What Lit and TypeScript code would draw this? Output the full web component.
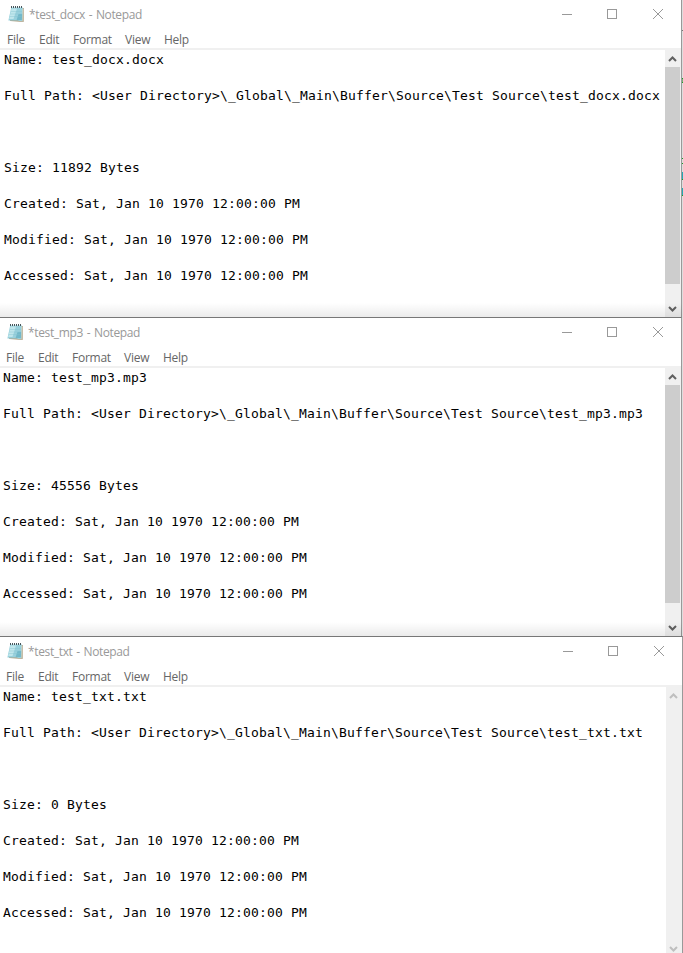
import { LitElement, html, css, svg, nothing } from "lit";
import { customElement, property } from "lit/decorators.js";
import { classMap } from "lit/directives/class-map.js";

@customElement("notepad-window")
class NotepadWindow extends LitElement {
  @property() name = "";
  @property() ext = "";
  @property() size = "0";
  @property({ type: Boolean }) inactive = false;

  static styles = css`
    :host { display: flex; flex-direction: column; box-sizing: border-box; background: #fff; overflow: hidden; }
    .title { display: flex; height: 30px; flex: none; align-items: center; color: #999; font: 12px/16px "Open Sans", "Noto Sans", sans-serif; }
    .logo { width: 17px; height: 17px; margin: 0 4px 1px 8px; flex: none; }
    .inset .logo { margin: 0 4px 1px 7px; }
    .caption { flex: 1; white-space: pre; letter-spacing: -0.36px; word-spacing: 1px; }
    .controls { display: block; width: 138px; height: 30px; flex: none; }
    .menu { display: flex; height: 18px; flex: none; color: #666; font: 12px/20px "Open Sans", "Noto Sans", sans-serif; padding-left: 7px; letter-spacing: -0.26px; white-space: nowrap; }
    .menu.inset { padding-left: 6px; }
    .m0 { width: 32px; } .m1 { width: 34px; } .m2 { width: 52px; } .m3 { width: 39px; }
    .rule { height: 2px; flex: none; background: #f0f0f0; }
    .body { display: flex; flex: 1; min-height: 0; }
    .text { flex: 1; margin: 0; padding: 1px 0 0 4px; font: 13px/18px "DejaVu Sans Mono", monospace; letter-spacing: 0.174px; color: #000; white-space: pre; overflow: hidden; min-width: 0; box-sizing: border-box; }
    .text.inset { padding-left: 3px; }
    .bar { width: 15px; padding-right: 1px; flex: none; background: #f0f0f0; display: flex; flex-direction: column; color: #606060; }
    .arrow { height: 17px; width: 15px; flex: none; display: block; }
    .thumb { height: 217px; background: #cdcdcd; }
    .short { height: 218px; }
    .gap { flex: 1; }
    .pale { color: #bfbfbf; }
  `;

  render() {
    const date = "Sat, Jan 10 1970 12:00:00 PM";
    const file = `${this.name}.${this.ext}`;
    const inset = this.ext !== "docx";
    const lines = [
      `Name: ${file}`, "",
      `Full Path: <User Directory>\\_Global\\_Main\\Buffer\\Source\\Test Source\\${file}`, "", "", "",
      `Size: ${this.size} Bytes`, "",
      `Created: ${date}`, "", `Modified: ${date}`, "", `Accessed: ${date}`,
    ].join("\n");
    return html`
      <div class=${classMap({ title: true, inset })}>
        <svg class="logo" viewBox="0 0 17 17">
          <path d="M3.5 2H15.8V15.8H12L2 15Z" fill="#a89c80"/>
          <path d="M3.2 1.5H14.8L14.3 15H11L10 14.4H.4Z" fill="#98d0dc"/>
          <path d="M3.6 2.5H9L5.5 13H1.2Z" fill="#c0e6ec"/>
          <path d="M10.5 8H14.3L13.8 14H8.6Z" fill="#72b8c9"/>
          <path d="M3 5.5H14M2.4 8H14M1.8 10.5H13.6" stroke="#84c2cf" stroke-width=".4"/>
          <path d="M14.9 2.5V15" stroke="#f5f1e0" stroke-width=".6"/>
          <path d="M3 1H15" stroke="#46565c" stroke-width="2" stroke-dasharray="1 1"/>
        </svg>
        <div class="caption">*${this.name} - Notepad</div>
        <svg class="controls" viewBox="0 0 138 30" fill="none" stroke="#999">
          <path d="M19 14.5H29"/>
          <rect x="64.5" y="9.5" width="9" height="9"/>
          <path d="M110 9L120 19M120 9L110 19"/>
        </svg>
      </div>
      <div class=${classMap({ menu: true, inset })}>
        ${["File", "Edit", "Format", "View", "Help"].map((t, i) => html`<span class="m${i}">${t}</span>`)}
      </div>
      <div class="rule"></div>
      <div class="body">
        <pre class=${classMap({ text: true, inset })}>${lines}</pre>
        <div class=${classMap({ bar: true, pale: this.inactive })}>
          <svg class="arrow" viewBox="0 0 15 17"><path d="M4 11L7.5 7.5L11 11" fill="none" stroke="currentColor" stroke-width="2"/></svg>
          ${this.inactive ? nothing : html`<div class=${classMap({ thumb: true, short: this.ext === "mp3" })}></div>`}
          <div class="gap"></div>
          <svg class="arrow" viewBox="0 0 15 17"><path d="M4 7L7.5 10.5L11 7" fill="none" stroke="currentColor" stroke-width="2"/></svg>
        </div>
      </div>
    `;
  }
}

@customElement("app-root")
class AppRoot extends LitElement {
  static styles = css`
    :host { display: grid; grid-template-rows: 317px 319px 321px; width: 683px; height: 953px; background: #ddd; overflow: hidden; position: relative; }
    .docx, .mp3 { width: 682px; border-right: 1px solid #999; }
    .mp3, .txt { border-top: 1px solid #777; }
    .txt { width: 683px; border-right: 1px solid #999; }
    .shade { position: absolute; left: 0; width: 682px; height: 14px; background: linear-gradient(transparent, rgba(0, 0, 0, 0.08)); }
    .s1 { top: 303px; }
    .s2 { top: 622px; }
    .edge { position: absolute; left: 682px; top: 0; width: 1px; height: 636px; }
  `;

  render() {
    return html`
      <notepad-window class="docx" name="test_docx" ext="docx" size="11892"></notepad-window>
      <notepad-window class="mp3" name="test_mp3" ext="mp3" size="45556"></notepad-window>
      <notepad-window class="txt" name="test_txt" ext="txt" size="0" inactive></notepad-window>
      <div class="shade s1"></div>
      <div class="shade s2"></div>
      <svg class="edge" viewBox="0 0 1 636">
        ${svg`<path d="M0 30h1v1h-1z" fill="#777"/>
        <path d="M0 78h1v1h-1zM0 82h1v1h-1zM0 158h1v1h-1zM0 163h1v1h-1zM0 179h1v1h-1zM0 195h1v1h-1z" fill="#1f9a2a"/>
        <path d="M0 79h1v3h-1z" fill="#7ab07a"/>
        <path d="M0 172h1v7h-1zM0 188h1v7h-1z" fill="#25a9b5"/>`}
      </svg>
    `;
  }
}
